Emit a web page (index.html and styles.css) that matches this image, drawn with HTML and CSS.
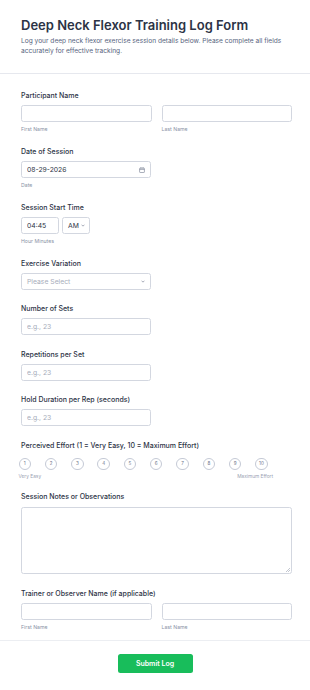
FILE: index.html
```html
<!DOCTYPE html>
<html lang="en">
<head>
<meta charset="utf-8">
<title>Deep Neck Flexor Training Log Form</title>
<link rel="stylesheet" href="styles.css">
</head>
<body>
<div class="form">
  <header class="form-header">
    <h1 class="title">Deep Neck Flexor Training Log Form</h1>
    <p class="subtitle">Log your deep neck flexor exercise session details below. Please complete all fields accurately for effective tracking.</p>
  </header>

  <main class="form-body">
    <div class="field">
      <label class="label">Participant Name</label>
      <div class="name-row">
        <div class="name-col">
          <input class="input" type="text">
          <span class="sublabel">First Name</span>
        </div>
        <div class="name-col">
          <input class="input" type="text">
          <span class="sublabel">Last Name</span>
        </div>
      </div>
    </div>

    <div class="field">
      <label class="label">Date of Session</label>
      <div class="input box half">
        <input class="bare value" type="text" value="08-29-2026">
        <svg class="cal" viewBox="0 0 10 10" width="6" height="6"><rect x="1" y="1.8" width="8" height="7.4" rx="1" fill="none" stroke="#7b8396" stroke-width="1.1"/><line x1="1" y1="4" x2="9" y2="4" stroke="#7b8396" stroke-width="1.1"/><line x1="3.2" y1="0.4" x2="3.2" y2="2.6" stroke="#7b8396" stroke-width="1.1"/><line x1="6.8" y1="0.4" x2="6.8" y2="2.6" stroke="#7b8396" stroke-width="1.1"/></svg>
      </div>
      <span class="sublabel">Date</span>
    </div>

    <div class="field">
      <label class="label">Session Start Time</label>
      <div class="time-row">
        <input class="input time" type="text" value="04:45">
        <div class="input box ampm">
          <span class="value">AM</span>
          <svg class="chev" viewBox="0 0 6 4" width="4" height="3"><path d="M0.8 0.8 L3 3 L5.2 0.8" fill="none" stroke="#6c7489" stroke-width="0.9"/></svg>
        </div>
      </div>
      <span class="sublabel">Hour Minutes</span>
    </div>

    <div class="field simple">
      <label class="label">Exercise Variation</label>
      <div class="input box half">
        <span class="placeholder">Please Select</span>
        <svg class="chev" viewBox="0 0 6 4" width="4" height="3"><path d="M0.8 0.8 L3 3 L5.2 0.8" fill="none" stroke="#6c7489" stroke-width="0.9"/></svg>
      </div>
    </div>

    <div class="field simple">
      <label class="label">Number of Sets</label>
      <input class="input half" type="text" placeholder="e.g., 23">
    </div>

    <div class="field simple">
      <label class="label">Repetitions per Set</label>
      <input class="input half" type="text" placeholder="e.g., 23">
    </div>

    <div class="field simple">
      <label class="label">Hold Duration per Rep (seconds)</label>
      <input class="input half" type="text" placeholder="e.g., 23">
    </div>

    <div class="field rating-field">
      <label class="label">Perceived Effort (1 = Very Easy, 10 = Maximum Effort)</label>
      <div class="rating">
        <div class="circles">
          <span class="circle">1</span>
          <span class="circle">2</span>
          <span class="circle">3</span>
          <span class="circle">4</span>
          <span class="circle">5</span>
          <span class="circle">6</span>
          <span class="circle">7</span>
          <span class="circle">8</span>
          <span class="circle">9</span>
          <span class="circle">10</span>
        </div>
        <div class="rating-labels">
          <span>Very Easy</span>
          <span>Maximum Effort</span>
        </div>
      </div>
    </div>

    <div class="field notes-field">
      <label class="label">Session Notes or Observations</label>
      <div class="notes-wrap">
        <textarea class="input notes"></textarea>
      </div>
    </div>

    <div class="field last">
      <label class="label">Trainer or Observer Name (if applicable)</label>
      <div class="name-row">
        <div class="name-col">
          <input class="input" type="text">
          <span class="sublabel">First Name</span>
        </div>
        <div class="name-col">
          <input class="input" type="text">
          <span class="sublabel">Last Name</span>
        </div>
      </div>
    </div>
  </main>

  <footer class="form-footer">
    <button class="submit" type="button">Submit Log</button>
  </footer>
</div>
</body>
</html>
```

FILE: styles.css
```css
* { box-sizing: border-box; }

html, body {
  margin: 0;
  padding: 0;
  background: #ffffff;
}

body {
  font-family: Inter, "Noto Sans", "Liberation Sans", sans-serif;
  color: #2c3345;
}

.form-header {
  padding: 17px 18px 17px 21px;
  border-bottom: 1px solid #e6e8ee;
}

.title {
  margin: 0;
  font-size: 13px;
  line-height: 16px;
  font-weight: 600;
  color: #2c3345;
}

.subtitle {
  margin: 3px 0 0;
  font-size: 6.6px;
  line-height: 10px;
  color: #57647e;
}

.form-body {
  padding: 17px 18px 0 21px;
  display: flex;
  flex-direction: column;
}

.field {
  display: flex;
  flex-direction: column;
  align-items: flex-start;
  margin-bottom: 14px;
}

.field.simple {
  margin-bottom: 14.5px;
}

.label {
  font-size: 7px;
  line-height: 10px;
  font-weight: 500;
  color: #2c3345;
  margin-bottom: 4px;
}

.input {
  height: 17px;
  border: 1px solid #d3d7e0;
  border-radius: 2.5px;
  background: #fff;
  font-family: inherit;
  font-size: 6.8px;
  color: #2c3345;
  padding: 0 5px;
  outline: none;
  margin: 0;
}

.input::placeholder {
  color: #a7adbb;
}

.half {
  width: 130px;
}

.box {
  display: flex;
  align-items: center;
  justify-content: space-between;
}

.bare {
  border: none;
  outline: none;
  padding: 0;
  margin: 0;
  background: transparent;
  font-family: inherit;
  font-size: 6.8px;
  color: #2c3345;
  width: 80px;
}

.value {
  font-size: 6.8px;
  color: #2c3345;
}

.placeholder {
  font-size: 6.8px;
  color: #a7adbb;
}

.cal {
  margin-right: 0.5px;
}

.name-row {
  display: flex;
  gap: 10px;
  width: 271px;
}

.name-col {
  flex: 1;
  display: flex;
  flex-direction: column;
}

.name-col .input {
  width: 100%;
}

.sublabel {
  margin-top: 4px;
  font-size: 5.2px;
  line-height: 7px;
  color: #8a93a6;
}

.time-row {
  display: flex;
  gap: 3px;
}

.time {
  width: 38px;
  height: 16.5px;
}

.ampm {
  width: 28px;
  height: 16.5px;
  padding: 0 4px 0 5px;
}

.rating-field {
  margin-bottom: 12.3px;
}

.rating-field .label {
  margin-bottom: 7px;
}

.rating {
  margin-left: -2.5px;
  width: 254.5px;
}

.circles {
  display: flex;
  gap: 13.8px;
}

.circle {
  width: 12.5px;
  height: 12.5px;
  border: 1px solid #c5cad6;
  border-radius: 50%;
  display: flex;
  align-items: center;
  justify-content: center;
  font-size: 4.6px;
  color: #6c7489;
}

.rating-labels {
  display: flex;
  justify-content: space-between;
  margin-top: 3px;
  font-size: 4.8px;
  line-height: 7px;
  color: #9aa1b2;
}

.notes-field {
  margin-bottom: 15px;
}

.notes-field .label {
  margin-bottom: 5px;
}

.notes-wrap {
  position: relative;
  width: 271px;
  height: 67px;
}

.notes-wrap::after {
  content: "";
  position: absolute;
  right: 2px;
  bottom: 2px;
  width: 4px;
  height: 4px;
  background: linear-gradient(135deg, transparent 45%, #c3c7d0 45%, #c3c7d0 55%, transparent 55%, transparent 70%, #c3c7d0 70%, #c3c7d0 80%, transparent 80%);
  pointer-events: none;
}

.notes {
  display: block;
  width: 271px;
  height: 67px;
  resize: none;
}

.field.last {
  margin-bottom: 9px;
}

.form-footer {
  border-top: 1px solid #eceef2;
  padding-top: 13px;
  display: flex;
  justify-content: center;
}

.submit {
  width: 75px;
  height: 19px;
  border: none;
  border-radius: 2.5px;
  background: #18bd5b;
  color: #ffffff;
  font-family: inherit;
  font-size: 7px;
  font-weight: 600;
  cursor: pointer;
}
```
